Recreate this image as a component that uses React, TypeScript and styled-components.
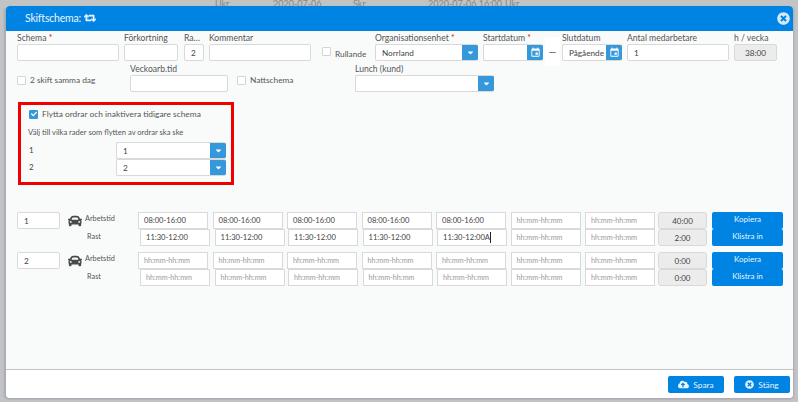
import React from "react";
import styled, { createGlobalStyle } from "styled-components";
import { FaCar, FaCaretDown, FaCheck, FaCloudUploadAlt, FaRetweet, FaTimesCircle } from "react-icons/fa";
import { MdEvent } from "react-icons/md";

const Global = createGlobalStyle`
  html, body { margin: 0; padding: 0; height: 402px; overflow: hidden; background: #c2c3c5; }
  body { font-family: "Lato", "Open Sans", sans-serif; color: #444; font-size: 9px; }
  * { box-sizing: border-box; }
`;

const Page = styled.div`
  width: 798px;
  height: 402px;
  padding: 0 5px 4px 6px;
  display: flex;
  flex-direction: column;
`;
const BackStrip = styled.div`
  height: 6px;
  overflow: hidden;
  display: flex;
  font-size: 9px;
  line-height: 6px;
  color: #868686;
  white-space: nowrap;
`;
const BackText = styled.span<{ $x: number }>`
  display: block;
  margin-top: 1px;
  width: ${p => p.$x}px;
  flex: none;
`;
const Modal = styled.div`
  flex: 1;
  display: flex;
  flex-direction: column;
  border-radius: 4px;
  overflow: hidden;
  background: #fff;
  box-shadow: -2px 1px 2px #a9abb3, 1px 1px 2px #a9abb3;
`;
const Header = styled.div`
  height: 25px;
  flex: none;
  background: #0084e3;
  display: flex;
  align-items: center;
  padding: 0 3px 0 19px;
  color: #eaf5fd;
  font-size: 10.5px;
  letter-spacing: -0.2px;
`;
const Title = styled.div`
  display: flex;
  align-items: center;
  gap: 3px;
  flex: 1;
  margin-top: -1px;
`;
const CloseButton = styled.span`
  display: flex;
  color: #d4e9f8;
  font-size: 13px;
`;
const Body = styled.div`
  flex: 1;
  background: #f9fbfb;
  padding: 4px 0 0 11px;
  display: flex;
  flex-direction: column;
`;
const FormRow = styled.div<{ $mt?: number }>`
  display: flex;
  align-items: flex-end;
  height: 26px;
  margin-top: ${p => p.$mt ?? 0}px;
`;
const Field = styled.div<{ $w: number; $ml?: number }>`
  width: ${p => p.$w}px;
  margin-left: ${p => p.$ml ?? 0}px;
  flex: none;
  display: flex;
  flex-direction: column;
`;
const Label = styled.label`
  display: block;
  height: 10px;
  line-height: 9px;
  font-size: 8.6px;
  color: #555;
  white-space: nowrap;
  overflow: hidden;
  text-overflow: ellipsis;
`;
const Required = styled.span`
  color: #e01010;
`;
const Input = styled.div<{ $grey?: boolean; $center?: boolean }>`
  height: 17px;
  background: ${p => (p.$grey ? "#ececec" : "#fff")};
  border: 1px solid #d9d9d9;
  border-radius: 2px;
  font-size: 8.2px;
  line-height: 16px;
  padding: 0 6px;
  color: #444;
  text-align: ${p => (p.$center ? "center" : "left")};
  white-space: nowrap;
  overflow: hidden;
`;
const Combo = styled.div`
  height: 17px;
  display: flex;
  background: #fff;
  border: 1px solid #d9d9d9;
  border-right: 0;
  border-radius: 2px;
  overflow: hidden;
`;
const ComboText = styled.div`
  flex: 1;
  font-size: 8.2px;
  line-height: 16px;
  padding: 0 6px;
  white-space: nowrap;
  overflow: hidden;
`;
const ComboButton = styled.div`
  width: 16px;
  flex: none;
  margin: -1px 0;
  background: #3498db;
  color: #fff;
  display: flex;
  align-items: center;
  justify-content: center;
  font-size: 9px;
`;
const Box = styled.span<{ $checked?: boolean }>`
  width: 9px;
  height: 9px;
  flex: none;
  display: inline-flex;
  align-items: center;
  justify-content: center;
  border: 1px solid ${p => (p.$checked ? "#3498db" : "#d5d5d5")};
  border-radius: 1px;
  background: ${p => (p.$checked ? "#3498db" : "#fff")};
  color: #fff;
  font-size: 6px;
`;
const CheckField = styled.div<{ $w: number; $ml?: number; $mb: number; $gap: number; $top?: boolean }>`
  display: flex;
  align-items: ${p => (p.$top ? "flex-start" : "center")};
  flex: none;
  width: ${p => p.$w}px;
  gap: ${p => p.$gap}px;
  margin-left: ${p => p.$ml ?? 0}px;
  margin-bottom: ${p => p.$mb}px;
  font-size: 8.3px;
  color: #555;
  white-space: nowrap;
`;
const DroppedText = styled.span`
  margin-top: 2px;
  line-height: 10px;
`;
const Dash = styled.div`
  width: 15px;
  flex: none;
  height: 29px;
  margin: 0 2px -5px;
  line-height: 29px;
  text-align: center;
  font-size: 10px;
  background: #fff;
`;
const MoveBox = styled.div`
  width: 216px;
  height: 83px;
  margin: 10px 0 0 1px;
  border: 3px solid #f00000;
  padding: 3px 5px 0 8px;
`;
const MoveCheck = styled.div`
  display: flex;
  align-items: center;
  gap: 4px;
  height: 12px;
  font-size: 8.4px;
  color: #555;
  white-space: nowrap;
`;
const MoveHint = styled.div`
  margin: 6px 0 0 -1px;
  height: 12px;
  line-height: 12px;
  font-size: 7.6px;
  color: #555;
  white-space: nowrap;
`;
const MoveRow = styled.div`
  display: flex;
  align-items: center;
  height: 17px;
  font-size: 8px;
`;
const MoveRows = styled.div`
  margin-top: 4px;
`;
const MoveIndex = styled.div`
  width: 87px;
  margin-top: -2px;
`;
const MoveCombo = styled(Combo)`
  width: 110px;
  flex: none;
`;
const ShiftArea = styled.div`
  margin-top: 27px;
  display: flex;
  flex-direction: column;
  gap: 6px;
`;
const ShiftRow = styled.div`
  display: flex;
  height: 34px;
`;
const RowNumber = styled(Input)`
  width: 43px;
  flex: none;
`;
const CarCell = styled.div`
  width: 25px;
  flex: none;
  padding: 2px 0 0 8px;
  font-size: 14px;
  line-height: 14px;
  color: #4a4a4a;
`;
const RowLabels = styled.div`
  width: 53px;
  flex: none;
  font-size: 7.3px;
  color: #555;
`;
const RowLabel = styled.div<{ $indent?: boolean }>`
  height: 17px;
  line-height: 13px;
  margin-left: ${p => (p.$indent ? 2 : 0)}px;
  padding-top: ${p => (p.$indent ? 1 : 0)}px;
`;
const Cols = styled.div`
  display: grid;
  grid-template-columns: repeat(7, 74.5px);
  width: 521px;
  flex: none;
`;
const TimeCol = styled.div`
  display: flex;
  flex-direction: column;
`;
const Time = styled.div<{ $ph?: boolean; $shift?: number }>`
  width: 70px;
  height: 17px;
  margin-left: ${p => p.$shift ?? 0}px;
  background: #fff;
  border: 1px solid #d9d9d9;
  font-size: ${p => (p.$ph ? 7.2 : 7.6)}px;
  line-height: 15px;
  padding-left: 5px;
  color: ${p => (p.$ph ? "#9a9a9a" : "#444")};
  white-space: nowrap;
  overflow: hidden;
`;
const Caret = styled.span`
  display: inline-block;
  width: 1px;
  height: 11px;
  background: #222;
  vertical-align: -3px;
`;
const Totals = styled.div`
  width: 49px;
  flex: none;
  margin-left: -1px;
`;
const Total = styled(Input)`
  font-size: 8px;
  padding: 0;
  border-radius: 3px;
`;
const Actions = styled.div`
  width: 71px;
  margin-left: 5px;
  flex: none;
  display: flex;
  flex-direction: column;
`;
const ActionButton = styled.div`
  height: 17px;
  background: #0084e3;
  color: #e6f3fc;
  font-size: 8px;
  line-height: 15px;
  text-align: center;
  border-radius: 2px;
`;
const Footer = styled.div`
  height: 29px;
  flex: none;
  background: #fff;
  border-top: 1px solid #c4c4c4;
  display: flex;
  justify-content: flex-end;
  gap: 10px;
  padding: 6px 3px 0 0;
`;
const FootButton = styled.div`
  width: 56px;
  height: 17px;
  background: #0084e3;
  color: #e6f3fc;
  border-radius: 2px;
  font-size: 8.3px;
  display: flex;
  align-items: center;
  justify-content: center;
  gap: 4px;
`;

const am = ["08:00-16:00", "08:00-16:00", "08:00-16:00", "08:00-16:00", "08:00-16:00", "", ""];
const shifts = [2, 2, 1, 1, 1, 0, 0];
const PH = "hh:mm-hh:mm";

function Shift({ n, work, rest, t1, t2 }: { n: string; work: string[]; rest: string[]; t1: string; t2: string }) {
  return (
    <ShiftRow>
      <RowNumber>{n}</RowNumber>
      <CarCell><FaCar /></CarCell>
      <RowLabels>
        <RowLabel>Arbetstid</RowLabel>
        <RowLabel $indent>Rast</RowLabel>
      </RowLabels>
      <Cols>
        {work.map((w, i) => (
          <TimeCol key={i}>
            <Time $ph={!w}>{w || PH}</Time>
            <Time $ph={!rest[i]} $shift={shifts[i]}>
              {rest[i] || PH}
              {n === "1" && i === 4 ? <>A<Caret /></> : null}
            </Time>
          </TimeCol>
        ))}
      </Cols>
      <Totals>
        <Total $grey $center>{t1}</Total>
        <Total $grey $center>{t2}</Total>
      </Totals>
      <Actions>
        <ActionButton>Kopiera</ActionButton>
        <ActionButton>Klistra in</ActionButton>
      </Actions>
    </ShiftRow>
  );
}

export default function App() {
  const rest = ["11:30-12:00", "11:30-12:00", "11:30-12:00", "11:30-12:00", "11:30-12:00", "", ""];
  const empty = ["", "", "", "", "", "", ""];
  return (
    <Page>
      <Global />
      <BackStrip>
        <BackText $x={209} />
        <BackText $x={58}>Ukr</BackText>
        <BackText $x={80}>2020-07-06</BackText>
        <BackText $x={75}>Skr</BackText>
        <BackText $x={77}>2020-07-06 16:00</BackText>
        <BackText $x={60}>Ukr</BackText>
      </BackStrip>
      <Modal>
        <Header>
          <Title>Skiftschema: <FaRetweet size={12} stroke="currentColor" strokeWidth={30} /></Title>
          <CloseButton><FaTimesCircle /></CloseButton>
        </Header>
        <Body>
          <FormRow>
            <Field $w={102}><Label>Schema <Required>*</Required></Label><Input /></Field>
            <Field $w={54} $ml={5}><Label>Förkortning</Label><Input /></Field>
            <Field $w={20} $ml={6}><Label>Rad...</Label><Input>2</Input></Field>
            <Field $w={102} $ml={5}><Label>Kommentar</Label><Input /></Field>
            <CheckField $w={43} $ml={11} $mb={2} $gap={4} $top><Box /><DroppedText>Rullande</DroppedText></CheckField>
            <Field $w={103} $ml={10}>
              <Label>Organisationsenhet <Required>*</Required></Label>
              <Combo><ComboText>Norrland</ComboText><ComboButton><FaCaretDown /></ComboButton></Combo>
            </Field>
            <Field $w={60} $ml={5}>
              <Label>Startdatum <Required>*</Required></Label>
              <Combo><ComboText /><ComboButton><MdEvent size={11} /></ComboButton></Combo>
            </Field>
            <Dash>—</Dash>
            <Field $w={60}>
              <Label>Slutdatum</Label>
              <Combo><ComboText>Pågående</ComboText><ComboButton><MdEvent size={11} /></ComboButton></Combo>
            </Field>
            <Field $w={102} $ml={5}><Label>Antal medarbetare</Label><Input>1</Input></Field>
            <Field $w={43} $ml={5}><Label>h / vecka</Label><Input $grey $center>38:00</Input></Field>
          </FormRow>
          <FormRow $mt={5}>
            <CheckField $w={113} $mb={7} $gap={4}><Box />2 skift samma dag</CheckField>
            <Field $w={98}><Label>Veckoarb.tid</Label><Input /></Field>
            <CheckField $w={118} $ml={9} $mb={7} $gap={4}><Box />Nattschema</CheckField>
            <Field $w={139}>
              <Label>Lunch (kund)</Label>
              <Combo><ComboText /><ComboButton><FaCaretDown /></ComboButton></Combo>
            </Field>
          </FormRow>
          <MoveBox>
            <MoveCheck><Box $checked><FaCheck /></Box>Flytta ordrar och inaktivera tidigare schema</MoveCheck>
            <MoveHint>Välj till vilka rader som flytten av ordrar ska ske</MoveHint>
            <MoveRows>
              <MoveRow>
                <MoveIndex>1</MoveIndex>
                <MoveCombo><ComboText>1</ComboText><ComboButton><FaCaretDown /></ComboButton></MoveCombo>
              </MoveRow>
              <MoveRow>
                <MoveIndex>2</MoveIndex>
                <MoveCombo><ComboText>2</ComboText><ComboButton><FaCaretDown /></ComboButton></MoveCombo>
              </MoveRow>
            </MoveRows>
          </MoveBox>
          <ShiftArea>
            <Shift n="1" work={am} rest={rest} t1="40:00" t2="2:00" />
            <Shift n="2" work={empty} rest={empty} t1="0:00" t2="0:00" />
          </ShiftArea>
        </Body>
        <Footer>
          <FootButton><FaCloudUploadAlt size={11} />Spara</FootButton>
          <FootButton><FaTimesCircle size={9} />Stäng</FootButton>
        </Footer>
      </Modal>
    </Page>
  );
}
